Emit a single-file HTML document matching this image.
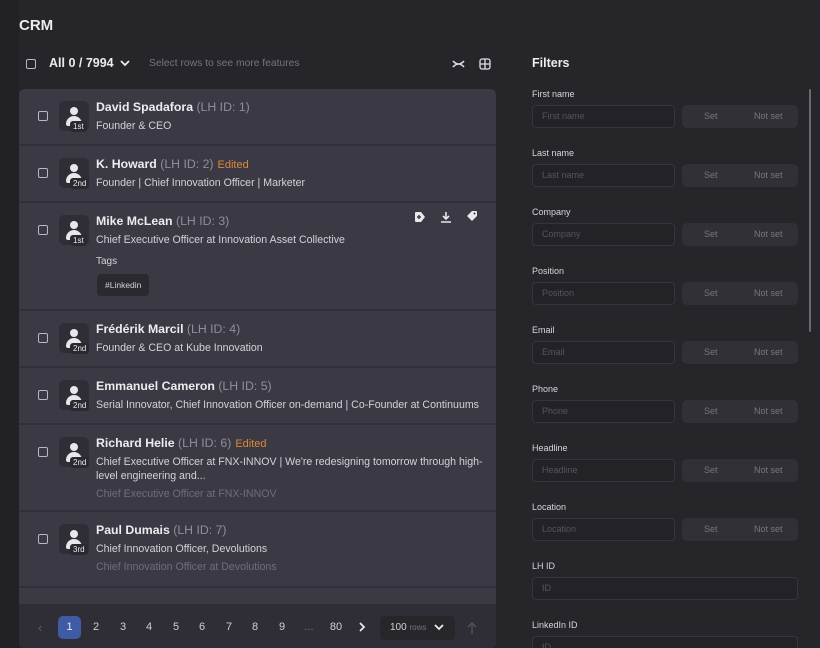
<!DOCTYPE html>
<html style="overflow:hidden;height:648px"><head><meta charset="utf-8"><style>
*{box-sizing:border-box;margin:0;padding:0}
html,body{overflow:hidden}
body{width:820px;height:648px;overflow:hidden;background:#26252a;font-family:"Liberation Sans",sans-serif;color:#e6e6ea;position:relative}
.a{position:absolute}
.cb{position:absolute;width:10px;height:10px;border:1.3px solid #b8b8c0;border-radius:2px}
.card{left:19px;top:89px;width:477px;height:559px;background:#3b3a44;border-radius:6px;overflow:hidden}
.row{position:absolute;left:0;width:477px;border-bottom:2px solid #312f37}
.av{position:absolute;left:40px;width:30px;height:30px;background:#2f2e36;border-radius:5px}
.av .h{position:absolute;left:11px;top:6px;width:8px;height:8px;border-radius:50%;background:#e8e8ec}
.av .b{position:absolute;left:7px;top:15px;width:16px;height:10px;border-radius:8px 8px 2px 2px;background:#e8e8ec}
.av .d{position:absolute;left:11px;top:20px;height:11px;padding:0 3px;background:#2a2930;border-radius:3px;font-size:8px;line-height:11px;color:#e8e8ec}
.nm{position:absolute;left:77px;font-size:12.3px;font-weight:bold;color:#ececf0;white-space:nowrap}
.nm span{font-weight:normal;color:#8f8e98}
.nm i{font-style:normal;font-weight:normal;color:#d98a3a;font-size:11px;margin-left:4px}
.sub{position:absolute;left:77px;font-size:10.6px;color:#d2d2d8;white-space:nowrap;line-height:14px}
.g{color:#6f6e78}
.lbl{position:absolute;left:532px;font-size:9px;color:#d6d6dc}
.inp{position:absolute;left:532px;width:143px;height:23px;border:1px solid #36353c;background:#232227;border-radius:4px;font-size:9px;color:#56555e;padding:0 9px;line-height:21px}
.pill{position:absolute;left:682px;width:116px;height:23px;background:#313036;border-radius:5px;font-size:9px;color:#77767f;line-height:23px}
.pill span{position:absolute}
.pg{position:absolute;top:627px;font-size:11px;color:#cfcfd6;width:20px;text-align:center;transform:translateY(-50%)}
</style></head><body>
<div class="a" style="left:0;top:0;width:19px;height:648px;background:#222125"></div>
<div class="a" style="left:19px;top:17px;font-size:15px;font-weight:bold;color:#ececf0">CRM</div>
<div class="cb" style="left:26px;top:59px"></div>
<div class="a" style="left:49px;top:56px;font-size:12.5px;font-weight:bold;color:#ececf0">All 0 / 7994</div>
<svg class="a" style="left:119px;top:58px" width="12" height="10"><path d="M2 3l4 4 4-4" stroke="#ececf0" stroke-width="1.8" fill="none"/></svg>
<div class="a" style="left:149px;top:58px;font-size:10.3px;color:#76757e">Select rows to see more features</div>
<svg class="a" style="left:452px;top:59px" width="13" height="10"><path d="M1 2q5.5 6 11 0M1 8q5.5-6 11 0" stroke="#e0e0e6" stroke-width="1.6" fill="none"/></svg>
<svg class="a" style="left:479px;top:58px" width="12" height="12"><rect x="1" y="1" width="10" height="10" rx="2" stroke="#e0e0e6" stroke-width="1.3" fill="none"/><path d="M6 1v10M1 6h10" stroke="#e0e0e6" stroke-width="1.3"/></svg>

<div class="a card">
 <div class="row" style="top:0;height:57px"><div class="cb" style="left:19px;top:22px"></div><div class="av" style="top:12px"><div class="h"></div><div class="b"></div><div class="d">1st</div></div><div class="nm" style="top:11px">David Spadafora <span>(LH ID: 1)</span></div><div class="sub" style="top:30px">Founder &amp; CEO</div></div>
 <div class="row" style="top:57px;height:57px"><div class="cb" style="left:19px;top:22px"></div><div class="av" style="top:12px"><div class="h"></div><div class="b"></div><div class="d">2nd</div></div><div class="nm" style="top:11px">K. Howard <span>(LH ID: 2)</span><i>Edited</i></div><div class="sub" style="top:30px">Founder | Chief Innovation Officer | Marketer</div></div>
 <div class="row" style="top:114px;height:108px"><div class="cb" style="left:19px;top:22px"></div><div class="av" style="top:12px"><div class="h"></div><div class="b"></div><div class="d">1st</div></div><div class="nm" style="top:11px">Mike McLean <span>(LH ID: 3)</span></div><div class="sub" style="top:30px">Chief Executive Officer at Innovation Asset Collective</div><div class="sub" style="top:52px;font-size:10px">Tags</div><div class="a" style="left:78px;top:71px;height:22px;padding:0 8px;background:#2a2930;border-radius:4px;font-size:8.5px;line-height:22px;color:#d2d2d8">#Linkedin</div>
 <svg class="a" style="left:395px;top:8px" width="12" height="12"><path d="M1 2q0-1 1-1h5l4 5-4 5H2q-1 0-1-1z" fill="#e8e8ec"/><path d="M5 4v4M3 6h4" stroke="#3b3a44" stroke-width="1.5"/></svg>
 <svg class="a" style="left:421px;top:8px" width="12" height="12"><path d="M6 1v6M3 5l3 3 3-3M1 11h10" stroke="#e8e8ec" stroke-width="1.6" fill="none"/></svg>
 <svg class="a" style="left:447px;top:7px" width="12" height="12"><path d="M6 1h4q1 0 1 1v4l-5 5-5-5z" fill="#e8e8ec"/><circle cx="8.5" cy="3.5" r="1" fill="#3b3a44"/></svg></div>
 <div class="row" style="top:222px;height:57px"><div class="cb" style="left:19px;top:22px"></div><div class="av" style="top:12px"><div class="h"></div><div class="b"></div><div class="d">2nd</div></div><div class="nm" style="top:11px">Frédérik Marcil <span>(LH ID: 4)</span></div><div class="sub" style="top:30px">Founder &amp; CEO at Kube Innovation</div></div>
 <div class="row" style="top:279px;height:57px"><div class="cb" style="left:19px;top:22px"></div><div class="av" style="top:12px"><div class="h"></div><div class="b"></div><div class="d">2nd</div></div><div class="nm" style="top:11px">Emmanuel Cameron <span>(LH ID: 5)</span></div><div class="sub" style="top:30px">Serial Innovator, Chief Innovation Officer on-demand | Co-Founder at Continuums</div></div>
 <div class="row" style="top:336px;height:87px"><div class="cb" style="left:19px;top:22px"></div><div class="av" style="top:12px"><div class="h"></div><div class="b"></div><div class="d">2nd</div></div><div class="nm" style="top:11px">Richard Helie <span>(LH ID: 6)</span><i>Edited</i></div><div class="sub" style="top:30px">Chief Executive Officer at FNX-INNOV | We're redesigning tomorrow through high-<br>level engineering and...</div><div class="sub g" style="top:62px">Chief Executive Officer at FNX-INNOV</div></div>
 <div class="row" style="top:423px;height:76px"><div class="cb" style="left:19px;top:22px"></div><div class="av" style="top:12px"><div class="h"></div><div class="b"></div><div class="d">3rd</div></div><div class="nm" style="top:11px">Paul Dumais <span>(LH ID: 7)</span></div><div class="sub" style="top:30px">Chief Innovation Officer, Devolutions</div><div class="sub g" style="top:48px">Chief Innovation Officer at Devolutions</div></div>
 <div class="a" style="left:0;top:515px;width:477px;height:44px;background:#2f2e36"></div>
</div>
<div class="a" style="left:38px;top:620px;width:10px;color:#5a5962;font-size:13px">‹</div>
<div class="a" style="left:58px;top:616px;width:23px;height:23px;background:#3f5ba3;border-radius:5px;color:#e8ecf6;font-size:11px;text-align:center;line-height:23px">1</div>
<div class="pg" style="left:86px">2</div><div class="pg" style="left:113px">3</div><div class="pg" style="left:139px">4</div><div class="pg" style="left:166px">5</div><div class="pg" style="left:192px">6</div><div class="pg" style="left:219px">7</div><div class="pg" style="left:245px">8</div><div class="pg" style="left:272px">9</div><div class="pg" style="left:299px;color:#6f6e78">...</div><div class="pg" style="left:326px">80</div>
<svg class="a" style="left:357px;top:621px" width="10" height="12"><path d="M3 2l4 4-4 4" stroke="#e8e8ec" stroke-width="1.8" fill="none"/></svg>
<div class="a" style="left:380px;top:616px;width:75px;height:24px;background:#27262b;border-radius:5px;font-size:10px;line-height:24px;padding-left:10px;color:#d2d2d8">100 <span style="font-size:8px;color:#77767f">rows</span></div>
<svg class="a" style="left:433px;top:623px" width="12" height="10"><path d="M2 2l4 4 4-4" stroke="#ececf0" stroke-width="1.8" fill="none"/></svg>
<svg class="a" style="left:467px;top:621px" width="10" height="14"><path d="M5 13V2M1 6l4-4 4 4" stroke="#55545c" stroke-width="1.3" fill="none"/></svg>

<div class="a" style="left:532px;top:56px;font-size:12.5px;font-weight:bold;color:#ececf0">Filters</div>
<div class="a" style="left:809px;top:89px;width:2px;height:243px;background:#6a6970;border-radius:1px"></div>

<div class="lbl" style="top:89px">First name</div><div class="inp" style="top:105px">First name</div><div class="pill" style="top:105px"><span style="left:22px">Set</span><span style="left:72px">Not set</span></div>
<div class="lbl" style="top:148px">Last name</div><div class="inp" style="top:164px">Last name</div><div class="pill" style="top:164px"><span style="left:22px">Set</span><span style="left:72px">Not set</span></div>
<div class="lbl" style="top:207px">Company</div><div class="inp" style="top:223px">Company</div><div class="pill" style="top:223px"><span style="left:22px">Set</span><span style="left:72px">Not set</span></div>
<div class="lbl" style="top:266px">Position</div><div class="inp" style="top:282px">Position</div><div class="pill" style="top:282px"><span style="left:22px">Set</span><span style="left:72px">Not set</span></div>
<div class="lbl" style="top:325px">Email</div><div class="inp" style="top:341px">Email</div><div class="pill" style="top:341px"><span style="left:22px">Set</span><span style="left:72px">Not set</span></div>
<div class="lbl" style="top:384px">Phone</div><div class="inp" style="top:400px">Phone</div><div class="pill" style="top:400px"><span style="left:22px">Set</span><span style="left:72px">Not set</span></div>
<div class="lbl" style="top:443px">Headline</div><div class="inp" style="top:459px">Headline</div><div class="pill" style="top:459px"><span style="left:22px">Set</span><span style="left:72px">Not set</span></div>
<div class="lbl" style="top:502px">Location</div><div class="inp" style="top:518px">Location</div><div class="pill" style="top:518px"><span style="left:22px">Set</span><span style="left:72px">Not set</span></div>
<div class="lbl" style="top:561px">LH ID</div><div class="inp" style="top:577px;width:266px">ID</div>
<div class="lbl" style="top:620px">LinkedIn ID</div><div class="inp" style="top:636px;width:266px;height:12px;border-bottom:none;border-radius:4px 4px 0 0">ID</div>
</body></html>
